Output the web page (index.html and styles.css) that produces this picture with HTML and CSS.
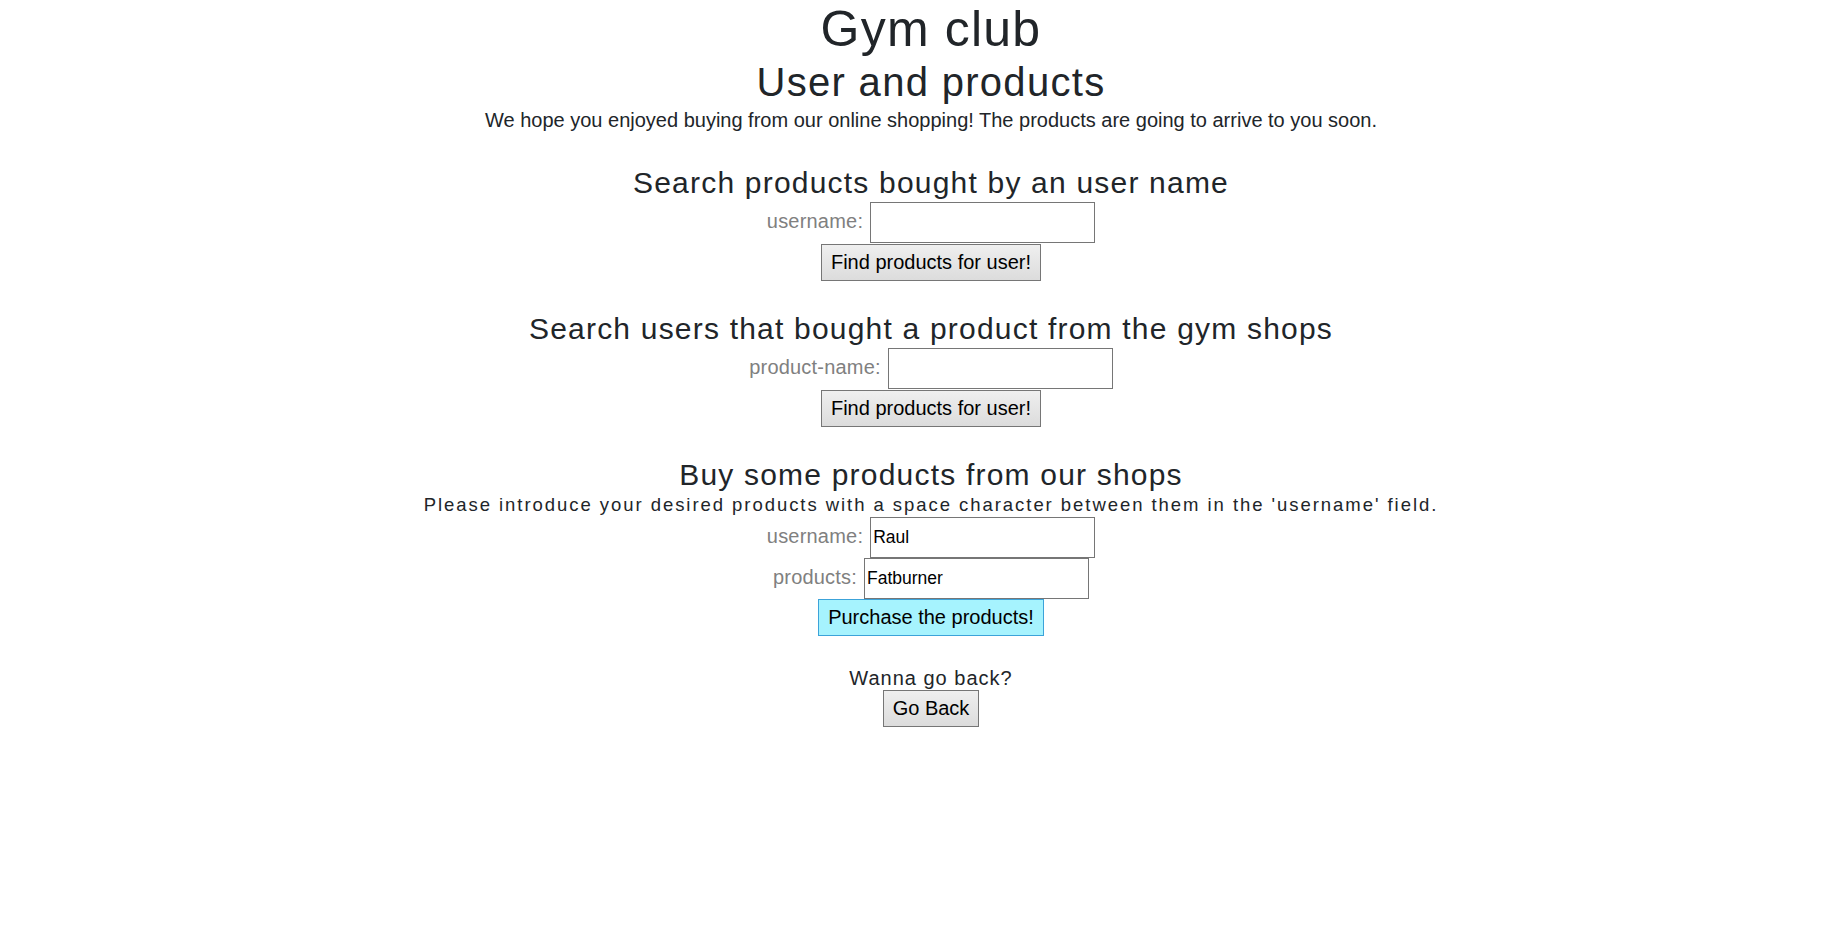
FILE: index.html
```html
<!DOCTYPE html>
<html lang="en">
<head>
<meta charset="utf-8">
<title>Gym club - User and products</title>
<link rel="stylesheet" href="styles.css">
</head>
<body>
<main class="page">
  <h1 class="title">Gym club</h1>
  <h2 class="subtitle">User and products</h2>
  <p class="intro">We hope you enjoyed buying from our online shopping! The products are going to arrive to you soon.</p>

  <form class="section">
    <h4 class="section-title">Search products bought by an user name</h4>
    <div class="field">
      <label class="field-label" for="u1">username:</label>
      <input class="field-input" id="u1" type="text">
    </div>
    <button class="btn" type="button">Find products for user!</button>
  </form>

  <form class="section">
    <h4 class="section-title">Search users that bought a product from the gym shops</h4>
    <div class="field">
      <label class="field-label" for="p1">product-name:</label>
      <input class="field-input" id="p1" type="text">
    </div>
    <button class="btn" type="button">Find products for user!</button>
  </form>

  <form class="section">
    <h4 class="section-title">Buy some products from our shops</h4>
    <p class="hint">Please introduce your desired products with a space character between them in the 'username' field.</p>
    <div class="field field-tight">
      <label class="field-label" for="u2">username:</label>
      <input class="field-input" id="u2" type="text" value="Raul">
    </div>
    <div class="field field-tight">
      <label class="field-label" for="p2">products:</label>
      <input class="field-input" id="p2" type="text" value="Fatburner">
    </div>
    <button class="btn btn-buy" type="button">Purchase the products!</button>
  </form>

  <div class="back">
    <p class="back-text">Wanna go back?</p>
    <button class="btn btn-back" type="button">Go Back</button>
  </div>
</main>
</body>
</html>
```

FILE: styles.css
```css
html, body {
  margin: 0;
  padding: 0;
  background: #ffffff;
}

body {
  font-family: "Liberation Sans", Arial, sans-serif;
  color: #212529;
}

.page {
  padding-left: 26px;
  text-align: center;
  display: flex;
  flex-direction: column;
  align-items: center;
}

.title {
  margin: 0;
  font-size: 50px;
  font-weight: 400;
  line-height: 58px;
  letter-spacing: 1.2px;
}

.subtitle {
  margin: 2px 0 1px;
  font-size: 40px;
  font-weight: 400;
  line-height: 44px;
  letter-spacing: 1.3px;
}

.intro {
  margin: 0;
  font-size: 20px;
  line-height: 30px;
}

.section {
  margin: 30px 0 0;
  display: flex;
  flex-direction: column;
  align-items: center;
}

.section-title {
  margin: 0;
  font-size: 30px;
  font-weight: 400;
  line-height: 36px;
  letter-spacing: 1.2px;
}

.hint {
  margin: 0;
  font-size: 18.5px;
  line-height: 24px;
  letter-spacing: 1.95px;
}

.field {
  margin-top: 1px;
  display: flex;
  justify-content: center;
  align-items: baseline;
  gap: 7px;
}

.field-tight {
  margin-top: 0;
}

.field-label {
  font-size: 20px;
  line-height: 23px;
  color: #808080;
  letter-spacing: 0.2px;
}

.field-input {
  box-sizing: border-box;
  width: 225px;
  height: 41px;
  margin: 0;
  padding: 1px 2px;
  border: 1px solid #767676;
  border-radius: 0;
  background: #ffffff;
  font-family: "Liberation Sans", Arial, sans-serif;
  font-size: 17.5px;
  color: #000000;
  outline: none;
}

.btn {
  margin: 1px 0 0;
  padding: 6px 9px;
  border: 1px solid #767676;
  border-radius: 0;
  background: linear-gradient(#efefef, #dcdcdc);
  font-family: "Liberation Sans", Arial, sans-serif;
  font-size: 20px;
  line-height: 23px;
  color: #000000;
  cursor: pointer;
}

.btn-buy {
  margin-top: 0;
  background: #a6f3fe;
  border-color: #3ca3d9;
}

.back {
  margin-top: 30px;
  display: flex;
  flex-direction: column;
  align-items: center;
}

.back-text {
  margin: 0;
  font-size: 20px;
  line-height: 24px;
  letter-spacing: 1px;
}

.btn-back {
  margin-top: 0;
}
```
